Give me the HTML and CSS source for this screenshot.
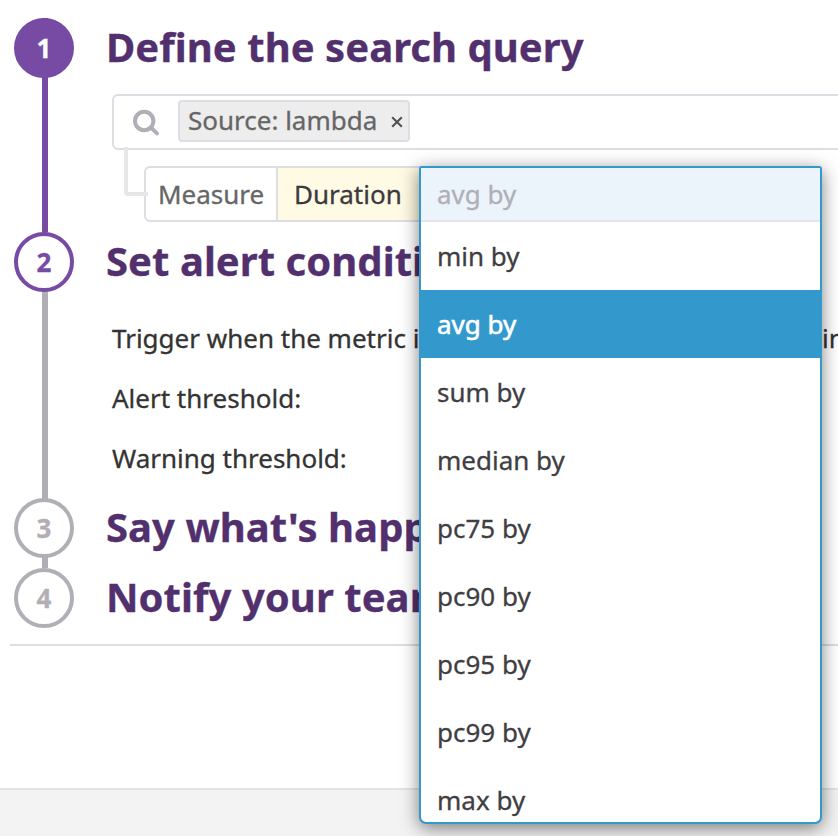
FILE: index.html
```html
<!DOCTYPE html>
<html lang="en">
<head>
<meta charset="utf-8">
<title>New Monitor</title>
<link rel="stylesheet" href="styles.css">
</head>
<body>
<main class="steps">
  <section class="step step-query">
    <div class="rail done"><span class="badge filled">1</span></div>
    <div class="content">
      <h2>Define the search query</h2>
      <div class="search">
        <svg class="search-icon" viewBox="0 0 28 28" width="28" height="28"><circle cx="12.2" cy="12" r="9.2"/><path d="M19 18.8L25 24.4"/></svg>
        <span class="tag">Source: lambda<svg class="close" viewBox="0 0 12 12" width="12" height="12"><path d="M1.2 1.2L10.8 10.8M10.8 1.2L1.2 10.8"/></svg></span>
      </div>
      <div class="measure">
        <span class="elbow"></span>
        <span class="label">Measure</span>
        <span class="metric">Duration</span>
        <div class="dropdown">
          <div class="current">avg by</div>
          <ul>
            <li>min by</li>
            <li class="selected">avg by</li>
            <li>sum by</li>
            <li>median by</li>
            <li>pc75 by</li>
            <li>pc90 by</li>
            <li>pc95 by</li>
            <li>pc99 by</li>
            <li>max by</li>
          </ul>
        </div>
      </div>
    </div>
  </section>
  <section class="step step-alert">
    <div class="rail"><span class="badge active">2</span></div>
    <div class="content">
      <h2>Set alert conditions</h2>
      <div class="conditions">
        <p class="trigger"><span>Trigger when the metric is</span><span>in</span></p>
        <p>Alert threshold:</p>
        <p>Warning threshold:</p>
      </div>
    </div>
  </section>
  <section class="step step-say">
    <div class="rail"><span class="badge">3</span></div>
    <div class="content"><h2>Say what's happening</h2></div>
  </section>
  <section class="step step-notify">
    <div class="rail last"><span class="badge">4</span></div>
    <div class="content"><h2>Notify your team</h2></div>
  </section>
</main>
<footer></footer>
</body>
</html>
```
FILE: styles.css
```css
* { box-sizing: border-box; }
html, body { height: 100%; }
body {
  margin: 0;
  display: flex;
  flex-direction: column;
  overflow: hidden;
  background: #fff;
  color: #333;
  font: 26px/36px "Noto Sans", sans-serif;
  -webkit-text-stroke: .3px currentColor;
}
h2, p, ul { margin: 0; padding: 0; }
.steps {
  height: 646px;
  margin-left: 10px;
  padding: 18px 0 0 4px;
  border-bottom: 2px solid #dddde3;
}
.step { display: grid; grid-template-columns: 60px 1fr; column-gap: 32px; }
.step-query { height: 214px; }
.step-alert { height: 266px; }
.step-say { height: 70px; }
.step-notify { height: 60px; }
.rail {
  height: 100%;
  background: linear-gradient(#b1afb5, #b1afb5) 28px 0 / 6px 100% no-repeat;
}
.rail.done { background-image: linear-gradient(#774aa4, #774aa4); }
.rail.last { background: none; }
.badge {
  display: flex;
  align-items: center;
  justify-content: center;
  width: 60px;
  height: 60px;
  border: 4px solid #b1afb5;
  border-radius: 50%;
  background: #fff;
  color: #b1afb5;
  font-size: 26px;
  font-weight: 700;
}
.badge.active { border-color: #774aa4; color: #774aa4; }
.badge.filled { border-color: #774aa4; background: #774aa4; color: #fff; }
.content { min-width: 0; }
h2 {
  height: 60px;
  color: #52306e;
  font-size: 40px;
  font-weight: 700;
  line-height: 57px;
  letter-spacing: .05px;
  white-space: nowrap;
}
.search {
  display: flex;
  align-items: flex-start;
  height: 56px;
  margin: 16px -10px 0 6px;
  padding: 4px 0 0 18px;
  border: 2px solid #dddde3;
  border-radius: 6px;
}
.search-icon {
  margin: 9px 18px 0 0;
  fill: none;
  stroke: #b1afb5;
  stroke-width: 4;
  stroke-linecap: round;
}
.tag {
  display: flex;
  align-items: center;
  height: 42px;
  padding: 0 5px 2px 8px;
  border: 2px solid #dddde3;
  border-radius: 4px;
  background: #ededed;
  color: #666;
}
.close { margin: 3px 0 0 14px; fill: none; stroke: #555; stroke-width: 2.2; }
.measure {
  position: relative;
  display: flex;
  width: 678px;
  height: 56px;
  margin: 16px 0 0 38px;
  border: 2px solid #dddde3;
  border-radius: 6px;
}
.elbow {
  position: absolute;
  left: -22px;
  top: -21px;
  width: 24px;
  height: 49px;
  border: solid #e7e7e7;
  border-width: 0 0 4px 4px;
  border-bottom-left-radius: 4px;
}
.label {
  width: 132px;
  padding-left: 12px;
  border-right: 2px solid #dddde3;
  line-height: 53px;
  color: #666;
}
.metric {
  width: 146px;
  padding-left: 16px;
  background: #fffae3;
  line-height: 53px;
  color: #3b3a40;
}
.dropdown {
  position: absolute;
  left: 273px;
  top: -2px;
  z-index: 2;
  width: 403px;
  height: 658px;
  overflow: hidden;
  border: 2px solid #3399cc;
  border-radius: 3px 3px 7px 7px;
  background: #fff;
  color: #3f3e43;
  box-shadow: 0 4px 18px rgba(0, 0, 0, .5);
}
.current {
  height: 54px;
  padding-left: 16px;
  border-bottom: 2px solid #e5e5e9;
  background: #ebf4fb;
  color: #b1afb5;
  line-height: 53px;
}
.dropdown ul { list-style: none; }
.dropdown li { height: 68px; padding-left: 16px; line-height: 68px; }
.dropdown .selected { background: #3399cc; color: #fff; -webkit-text-stroke-width: .6px; }
.conditions { margin: 16px 0 0 6px; }
.conditions p { height: 60px; line-height: 60px; white-space: nowrap; }
.trigger { display: grid; grid-template-columns: 710px auto; }
footer {
  flex: 1;
  margin-top: 142px;
  border-top: 2px solid #e4e4e4;
  background: #f3f3f3;
}
```
